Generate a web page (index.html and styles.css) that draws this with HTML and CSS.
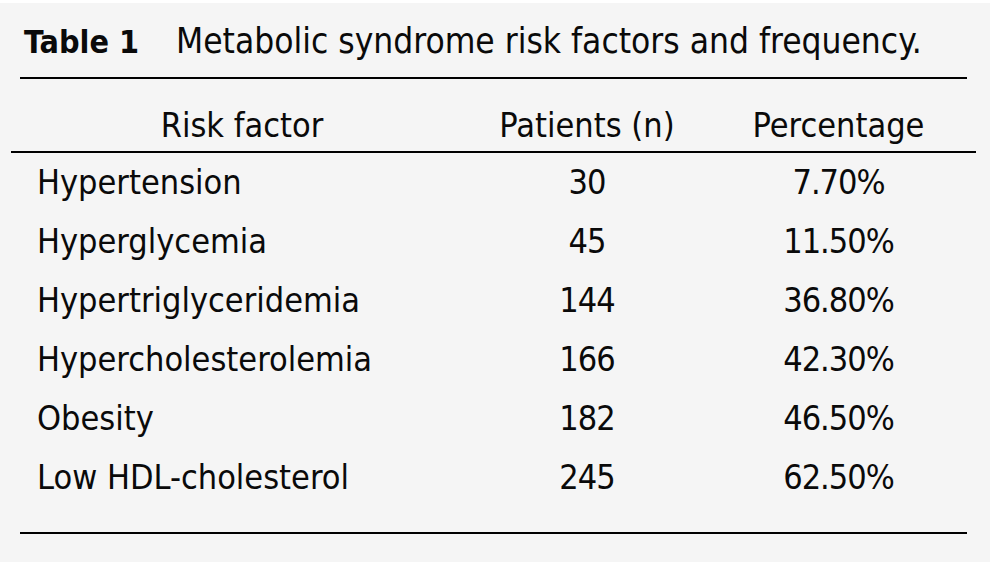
FILE: index.html
```html
<!DOCTYPE html>
<html lang="en">
<head>
<meta charset="utf-8">
<title>Table 1</title>
<link rel="stylesheet" href="styles.css">
</head>
<body>
<div class="sheet">
  <div class="caption"><span class="label">Table 1</span><span class="title">Metabolic syndrome risk factors and frequency.</span></div>
  <div class="rule rule-top"></div>
  <table class="data">
    <thead>
      <tr><th class="c1">Risk factor</th><th class="c2">Patients (n)</th><th class="c3">Percentage</th></tr>
    </thead>
    <tbody>
      <tr><td class="c1">Hypertension</td><td class="c2">30</td><td class="c3">7.70%</td></tr>
      <tr><td class="c1">Hyperglycemia</td><td class="c2">45</td><td class="c3">11.50%</td></tr>
      <tr><td class="c1">Hypertriglyceridemia</td><td class="c2">144</td><td class="c3">36.80%</td></tr>
      <tr><td class="c1">Hypercholesterolemia</td><td class="c2">166</td><td class="c3">42.30%</td></tr>
      <tr><td class="c1">Obesity</td><td class="c2">182</td><td class="c3">46.50%</td></tr>
      <tr><td class="c1">Low HDL-cholesterol</td><td class="c2">245</td><td class="c3">62.50%</td></tr>
    </tbody>
  </table>
  <div class="rule rule-bottom"></div>
</div>
</body>
</html>
```
FILE: styles.css
```css
html, body {
  margin: 0;
  padding: 0;
  background: #ffffff;
}
body {
  font-family: "DejaVu Sans", "Liberation Sans", sans-serif;
  font-stretch: condensed;
  color: #0a0a0a;
}
.sheet {
  background: #f5f5f5;
  margin: 3px 5px 0 0;
  height: 559px;
  box-sizing: border-box;
  padding-top: 18px;
}
.caption {
  font-size: 35px;
  line-height: 40px;
  padding-left: 24px;
  white-space: nowrap;
}
.label {
  font-size: 32px;
  font-weight: bold;
  margin-right: 37px;
}
.rule {
  height: 2px;
  background: #000;
}
.rule-top {
  margin: 15px 23px 0 20px;
}
.data {
  border-collapse: collapse;
  margin-left: 11px;
  width: 965px;
  font-size: 34px;
}
.data th {
  font-weight: normal;
  height: 73px;
  line-height: 40px;
  padding: 0 0 6px 0;
  box-sizing: border-box;
  border-bottom: 2px solid #000;
  vertical-align: bottom;
}
.data td {
  height: 59px;
  line-height: 59px;
  padding: 0;
  vertical-align: top;
}
.data th.c1 { text-align: center; width: 462px; }
.data th.c2 { text-align: center; width: 228px; }
.data th.c3 { text-align: center; }
.data td.c1 { text-align: left; padding-left: 26px; }
.data td.c2, .data td.c3 { text-align: center; letter-spacing: -1px; }
.rule-bottom {
  margin: 25px 23px 0 20px;
}
```
